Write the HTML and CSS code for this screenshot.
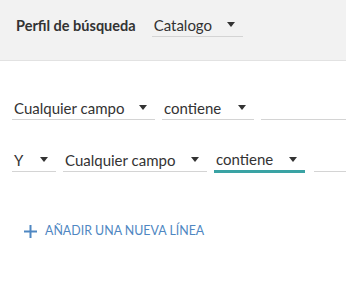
FILE: index.html
```html
<!DOCTYPE html>
<html lang="es">
<head>
<meta charset="utf-8">
<title>Búsqueda</title>
<link rel="stylesheet" href="styles.css">
</head>
<body>
<header class="profile-bar">
  <span class="profile-label">Perfil de búsqueda</span>
  <div class="select w-catalog"><span>Catalogo</span><span class="caret"></span></div>
</header>
<main class="query">
  <div class="row row-first">
    <div class="select w-field"><span>Cualquier campo</span><span class="caret"></span></div>
    <div class="select w-op"><span>contiene</span><span class="caret"></span></div>
    <div class="input"></div>
  </div>
  <div class="row">
    <div class="select w-bool"><span>Y</span><span class="caret"></span></div>
    <div class="select w-field2"><span>Cualquier campo</span><span class="caret"></span></div>
    <div class="select w-op2 focused"><span>contiene</span><span class="caret"></span></div>
    <div class="input"></div>
  </div>
  <a class="add-line" href="#">
    <svg class="plus" width="13" height="13" viewBox="0 0 13 13"><path d="M6.5 0v13M0 6.5h13" stroke="#4f87c2" stroke-width="2"/></svg>
    <span>AÑADIR UNA NUEVA LÍNEA</span>
  </a>
</main>
</body>
</html>
```
FILE: styles.css
```css
* { box-sizing: border-box; }
html, body { margin: 0; padding: 0; background: #fff; }
body {
  font-family: Lato, "Open Sans", sans-serif;
  color: #333;
  font-size: 15px;
  overflow: hidden;
  width: 346px;
  height: 283px;
}
.profile-bar {
  height: 61px;
  background: #f2f2f2;
  border-bottom: 1px solid #e2e2e2;
  display: flex;
  align-items: flex-start;
  padding: 14px 0 0 16px;
  gap: 16px;
}
.profile-label {
  font-weight: 700;
  font-size: 14.5px;
  line-height: 23px;
  color: #333;
}
.select {
  height: 23px;
  display: flex;
  align-items: center;
  justify-content: space-between;
  border-bottom: 1px solid #d4d4d4;
  padding: 0 8px 1px 2px;
  line-height: 22px;
  flex: none;
}
.caret {
  width: 0; height: 0;
  border-left: 4px solid transparent;
  border-right: 4px solid transparent;
  border-top: 5px solid #333;
}
.w-catalog { width: 91px; }
.query { padding: 36px 0 0 12px; }
.row { display: flex; gap: 7px; margin-bottom: 29px; }
.w-field { width: 143px; }
.w-op { width: 92px; }
.w-bool { width: 44px; }
.w-field2 { width: 144px; }
.w-op2 { width: 91px; }
.focused {
  border-bottom: 2px solid #3aa3a4;
  box-shadow: 0 1px 0 #3aa3a4;
}
.input {
  flex: 1 1 auto;
  min-width: 0;
  height: 23px;
  border-bottom: 1px solid #d4d4d4;
}
.row .focused + .input { margin-left: 2px; }
.add-line {
  display: flex;
  align-items: center;
  gap: 8px;
  margin: 52px 0 0 12px;
  color: #4f87c2;
  text-decoration: none;
  font-size: 12.4px;
  line-height: 14px;
}
.plus { flex: none; }
```
